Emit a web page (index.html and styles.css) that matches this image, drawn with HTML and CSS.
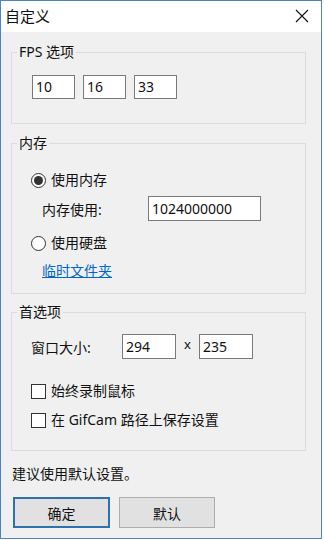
FILE: index.html
```html
<!DOCTYPE html>
<html lang="zh">
<head>
<meta charset="utf-8">
<title>自定义</title>
<link rel="stylesheet" href="styles.css">
</head>
<body>
<div class="window">
  <div class="titlebar">
    <span class="title">自定义</span>
    <svg class="close" width="14" height="14" viewBox="0 0 14 14"><path d="M1 1 L13 13 M13 1 L1 13" stroke="#111" stroke-width="1.1" fill="none"/></svg>
  </div>
  <div class="content">
    <fieldset class="group g1">
      <legend>FPS 选项</legend>
      <div class="inner fps-inner">
        <span class="textbox fps">10</span>
        <span class="textbox fps">16</span>
        <span class="textbox fps">33</span>
      </div>
    </fieldset>

    <fieldset class="group g2">
      <legend>内存</legend>
      <div class="inner mem-inner">
        <div class="opt-row"><span class="radio"><span class="dot"></span></span><span>使用内存</span></div>
        <div class="mem-row"><span class="mem-label">内存使用:</span><span class="textbox mem">1024000000</span></div>
        <div class="opt-row disk"><span class="radio"></span><span>使用硬盘</span></div>
        <a class="link" href="#">临时文件夹</a>
      </div>
    </fieldset>

    <fieldset class="group g3">
      <legend>首选项</legend>
      <div class="inner pref-inner">
        <div class="size-row">
          <span class="size-label">窗口大小:</span>
          <span class="textbox size">294</span>
          <span class="times">x</span>
          <span class="textbox size">235</span>
        </div>
        <div class="opt-row cb1"><span class="checkbox"></span><span>始终录制鼠标</span></div>
        <div class="opt-row cb2"><span class="checkbox"></span><span>在 GifCam 路径上保存设置</span></div>
      </div>
    </fieldset>

    <div class="hint">建议使用默认设置。</div>

    <div class="buttons">
      <span class="btn primary">确定</span>
      <span class="btn">默认</span>
    </div>
  </div>
</div>
</body>
</html>
```

FILE: styles.css
```css
* { box-sizing: border-box; }
html, body { margin: 0; padding: 0; background: #ffffff; }
body {
  font-family: "Noto Sans", "Noto Sans CJK SC", sans-serif;
  font-size: 14px;
  color: #111;
}
.window {
  width: 322px;
  height: 539px;
  border: 1px solid #4a86bd;
  background: #f0f0f0;
  display: flex;
  flex-direction: column;
}
.titlebar {
  height: 31px;
  background: #ffffff;
  display: flex;
  align-items: center;
  justify-content: space-between;
  padding: 0 12px 1px 4px;
}
.title {
  font-size: 15px;
  line-height: 20px;
}
.close { display: block; }
.content {
  padding: 12px 15px 0 10px;
  display: flex;
  flex-direction: column;
}
.group {
  margin: 0;
  padding: 0;
  border: 1px solid #dcdcdc;
  min-width: 0;
}
.group legend {
  margin-left: 5px;
  padding: 0 2px;
  line-height: 16px;
  font-size: 14px;
}
.g2 { margin-top: 11px; }
.g3 { margin-top: 10px; }
.inner { display: flex; }
.fps-inner {
  padding: 15px 0 24px 20px;
  gap: 8px;
}
.textbox {
  background: #ffffff;
  border: 1px solid #7a7a7a;
  padding-left: 3px;
  display: block;
  font-size: 14px;
}
.fps { width: 43px; height: 24px; line-height: 22px; }
.mem-inner {
  flex-direction: column;
  padding: 19px 0 13px 19px;
}
.opt-row {
  display: flex;
  align-items: center;
  gap: 5px;
  height: 20px;
  line-height: 20px;
}
.radio {
  width: 15px;
  height: 15px;
  border: 1px solid #333;
  border-radius: 50%;
  background: #fff;
  display: flex;
  align-items: center;
  justify-content: center;
}
.dot {
  width: 9px;
  height: 9px;
  border-radius: 50%;
  background: #333;
}
.checkbox {
  width: 15px;
  height: 15px;
  border: 1px solid #333;
  background: #fff;
}
.mem-row {
  display: flex;
  align-items: center;
  margin-top: 6px;
  padding-left: 11px;
}
.mem-label { width: 106px; }
.mem { width: 113px; height: 25px; line-height: 23px; }
.disk { margin-top: 12px; }
.link {
  margin-top: 9px;
  margin-left: 11px;
  line-height: 18px;
  color: #0066cc;
  text-decoration: underline;
  align-self: flex-start;
}
.pref-inner {
  flex-direction: column;
  padding: 14px 0 20px 19px;
}
.size-row { display: flex; align-items: center; }
.size-label { width: 91px; }
.size { width: 54px; height: 25px; line-height: 23px; }
.times {
  align-self: flex-start;
  line-height: 20px;
  width: 23px;
  text-align: center;
  font-size: 13px;
}
.cb1 { margin-top: 22px; }
.cb2 { margin-top: 9px; }
.hint {
  margin-top: 15px;
  line-height: 16px;
  padding-left: 1px;
}
.buttons {
  margin-top: 15px;
  display: flex;
  gap: 9px;
  padding-left: 2px;
}
.btn {
  width: 96px;
  height: 31px;
  background: #e1e1e1;
  border: 1px solid #adadad;
  display: flex;
  align-items: center;
  justify-content: center;
  font-size: 14px;
}
.btn.primary {
  width: 97px;
  border: 2px solid #2f71ad;
}
```
